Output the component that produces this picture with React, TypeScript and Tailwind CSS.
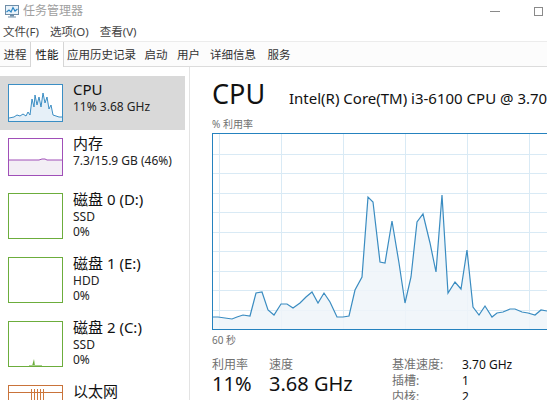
import React from "react"

// main chart samples, page coordinates taken off the screenshot
const cpuPts: [number, number][] = [
  [213, 317], [218, 317], [225, 318], [232, 319], [237, 317], [243, 315], [250, 316], [256, 293],
  [262, 292], [268, 310], [274, 315], [281, 304], [287, 304], [293, 308], [300, 303], [306, 297],
  [312, 292], [318, 303], [324, 293], [330, 302], [337, 317], [343, 317], [349, 316], [355, 290],
  [362, 277], [368, 197], [373, 202], [380, 262], [385, 263], [392, 221], [399, 263], [405, 303],
  [411, 277], [417, 222], [423, 214], [430, 243], [436, 272], [442, 195], [448, 293], [455, 282],
  [461, 289], [467, 250], [473, 307], [479, 315], [485, 306], [492, 317], [497, 313], [503, 312],
  [510, 309], [515, 309], [522, 312], [528, 313], [535, 315], [541, 310], [547, 311], [553, 312],
  [560, 314],
]

const tabs = [
  { label: "进程", w: "w-[30px]" },
  { label: "性能", w: "w-[34px]", active: true },
  { label: "应用历史记录", w: "w-[75px]" },
  { label: "启动", w: "w-[34px]" },
  { label: "用户", w: "w-[31px]" },
  { label: "详细信息", w: "w-[58px]" },
  { label: "服务", w: "w-[34px]" },
]

function AppIcon() {
  return (
    <svg width="14" height="13" viewBox="0 0 14 13">
      <rect x="0.5" y="0.5" width="13" height="9" fill="#eaf3fa" stroke="#6f8ea8" />
      <polyline points="1.5,7 4,5 6,7 8,2.5 10,6 12.5,4" fill="none" stroke="#2d86c4" strokeWidth="1.2" />
      <rect x="5" y="10" width="4" height="1.5" fill="#6f8ea8" />
      <rect x="3" y="11.5" width="8" height="1" fill="#6f8ea8" />
    </svg>
  )
}

function MainChart() {
  const rel = cpuPts.map(([x, y]) => [x - 213, y - 134])
  const line = rel.map(([x, y]) => `${x},${y}`).join(" ")
  const area = `${line} ${rel[rel.length - 1][0]},195 0,195`
  return (
    <div className="h-[197px] w-[420px] border border-[#2582bf]">
      <svg width="418" height="195" shapeRendering="crispEdges">
        {[1, 2, 3, 4, 5, 6, 7, 8, 9].map((k) => (
          <line key={"h" + k} x1="0" x2="418" y1={Math.round(k * 19.5) + 0.5} y2={Math.round(k * 19.5) + 0.5} stroke="#d9eaf5" />
        ))}
        {[0, 1, 2, 3, 4, 5, 6].map((k) => (
          <line key={"v" + k} y1="0" y2="195" x1={6 + 62 * k + 0.5} x2={6 + 62 * k + 0.5} stroke="#d9eaf5" />
        ))}
        <polygon points={area} fill="#eef4f9" fillOpacity="0.85" shapeRendering="auto" />
        <polyline points={line} fill="none" stroke="#3a8cc1" strokeWidth="1.2" shapeRendering="auto" />
      </svg>
    </div>
  )
}

function CpuThumb() {
  const p = "0,33 5,32 8,30 11,31 14,29 17,31 19,27 21,30 23,14 25,22 26,10 28,20 30,12 32,22 34,8 36,18 38,12 40,24 42,20 44,30 47,31 50,32 53,32"
  return (
    <div className="mt-[8px] h-[38px] w-[55px] shrink-0 border border-[#3b8ec4] bg-white">
      <svg width="53" height="36">
        <polygon points={p + " 53,36 0,36"} fill="#e6f0f8" />
        <polyline points={p} fill="none" stroke="#3b8ec4" strokeWidth="1" />
      </svg>
    </div>
  )
}

function MemThumb() {
  const p = "0,21 30,21 33,20 36,20 38,21 53,21"
  return (
    <div className="mt-[8px] h-[38px] w-[55px] shrink-0 border border-[#a04fb8] bg-white">
      <svg width="53" height="36">
        <polygon points={p + " 53,36 0,36"} fill="#f3eef5" />
        <polyline points={p} fill="none" stroke="#a04fb8" strokeWidth="1" />
      </svg>
    </div>
  )
}

function DiskThumb({ spike }: { spike?: boolean }) {
  return (
    <div className="mt-[9px] h-[46px] w-[55px] shrink-0 border border-[#6cad3c] bg-white">
      {spike && (
        <svg width="53" height="44">
          <polygon points="23,44 25,37 26,44" fill="#6cad3c" />
          <line x1="20" x2="33" y1="43.5" y2="43.5" stroke="#a9d08c" />
        </svg>
      )}
    </div>
  )
}

function NetThumb() {
  return (
    <div className="mt-[9px] h-[46px] w-[55px] shrink-0 border border-[#c9733a] bg-white">
      <svg width="53" height="44">
        <line x1="0" x2="53" y1="6.5" y2="6.5" stroke="#c9733a" />
        {[22, 25, 28, 31, 34].map((x) => (
          <line key={x} x1={x + 0.5} x2={x + 0.5} y1="3" y2="44" stroke="#d0793c" />
        ))}
      </svg>
    </div>
  )
}

function SideItem({
  thumb,
  title,
  lines,
  selected,
  tall,
}: {
  thumb: React.ReactNode
  title: string
  lines: string[]
  selected?: boolean
  tall?: boolean
}) {
  return (
    <div className={`flex w-[185px] gap-[10px] pl-[8px] ${tall ? "h-[64px]" : "h-[54px]"} ${selected ? "bg-[#d9d9d9]" : ""}`}>
      {thumb}
      <div className={`flex flex-col ${tall ? "mt-[6px]" : "mt-[4px]"}`}>
        <div className="h-[19px] whitespace-nowrap text-[15px] leading-[19px] text-[#111]">{title}</div>
        {lines.map((l) => (
          <div key={l} className="h-[15px] whitespace-nowrap text-[12px] leading-[15px] text-[#222]">
            {l}
          </div>
        ))}
      </div>
    </div>
  )
}

export default function App() {
  return (
    <div className="relative h-[400px] w-[547px] overflow-hidden bg-white font-['Noto_Sans','Noto_Sans_CJK_SC',sans-serif]">
      {/* title bar */}
      <div className="flex h-[22px] items-center pl-[5px]">
        <AppIcon />
        <span className="ml-[4px] text-[12px] leading-[14px] text-[#a0a0a0]">任务管理器</span>
        <div className="ml-auto flex items-center">
          <div className="mr-[34px] h-px w-[10px] bg-[#8a8a8a]" />
          <div className="mr-[4px] h-[9px] w-[9px] border border-[#8a8a8a]" />
        </div>
      </div>

      {/* menu */}
      <div className="flex h-[19px] items-center gap-[11px] pl-[3px] text-[11.5px] leading-[15px] text-[#444]">
        <span>文件(F)</span>
        <span>选项(O)</span>
        <span>查看(V)</span>
      </div>

      {/* tabs */}
      <div className="flex h-[26px] items-stretch border-y border-t-[#ececec] border-b-[#dcdcdc] bg-[#fcfcfc]">
        {tabs.map((t) => (
          <div
            key={t.label}
            className={`${t.w} -mb-px flex items-center justify-center text-[11.5px] leading-[14px] ${
              t.active ? "border-x border-[#d6d6d6] bg-white text-[#111]" : "text-[#333]"
            }`}
          >
            {t.label}
          </div>
        ))}
      </div>

      <div className="flex h-[333px]">
        {/* left list */}
        <div className="w-[190px] shrink-0 border-r border-[#e3e3e3] pt-[9px]">
          <SideItem selected thumb={<CpuThumb />} title="CPU" lines={["11% 3.68 GHz"]} />
          <SideItem thumb={<MemThumb />} title="内存" lines={["7.3/15.9 GB (46%)"]} />
          <SideItem tall thumb={<DiskThumb />} title="磁盘 0 (D:)" lines={["SSD", "0%"]} />
          <SideItem tall thumb={<DiskThumb />} title="磁盘 1 (E:)" lines={["HDD", "0%"]} />
          <SideItem tall thumb={<DiskThumb spike />} title="磁盘 2 (C:)" lines={["SSD", "0%"]} />
          <SideItem tall thumb={<NetThumb />} title="以太网" lines={[]} />
        </div>

        {/* detail */}
        <div className="min-w-0 flex-1 overflow-hidden pl-[22px] pt-[10px]">
          <div className="flex items-baseline whitespace-nowrap">
            <span className="w-[77px] shrink-0 text-[27px] leading-[34px] text-[#111]">CPU</span>
            <span className="text-[15px] leading-[20px] text-[#111]">Intel(R) Core(TM) i3-6100 CPU @ 3.70GHz</span>
          </div>
          <div className="mt-[7px] h-[13px] text-[10px] leading-[13px] text-[#707070]">% 利用率</div>
          <div className="mt-[2px]">
            <MainChart />
          </div>
          <div className="mt-[4px] h-[13px] text-[10px] leading-[13px] text-[#707070]">60 秒</div>

          <div className="mt-[11px] flex whitespace-nowrap">
            <div className="w-[57px] shrink-0">
              <div className="h-[14px] text-[12px] leading-[14px] text-[#707070]">利用率</div>
              <div className="text-[20px] leading-[24px] text-[#111]">11%</div>
            </div>
            <div className="w-[123px] shrink-0">
              <div className="h-[14px] text-[12px] leading-[14px] text-[#707070]">速度</div>
              <div className="text-[20px] leading-[24px] text-[#111]">3.68 GHz</div>
            </div>
            <div className="grid grid-cols-[70px_auto] text-[12px] leading-[18px]">
              <span className="-mt-[2px] text-[#707070]">基准速度:</span>
              <span className="-mt-[2px] text-[#111]">3.70 GHz</span>
              <span className="-mt-[2px] text-[#707070]">插槽:</span>
              <span className="-mt-[2px] text-[#111]">1</span>
              <span className="-mt-[2px] text-[#707070]">内核:</span>
              <span className="-mt-[2px] text-[#111]">2</span>
            </div>
          </div>
        </div>
      </div>
    </div>
  )
}
